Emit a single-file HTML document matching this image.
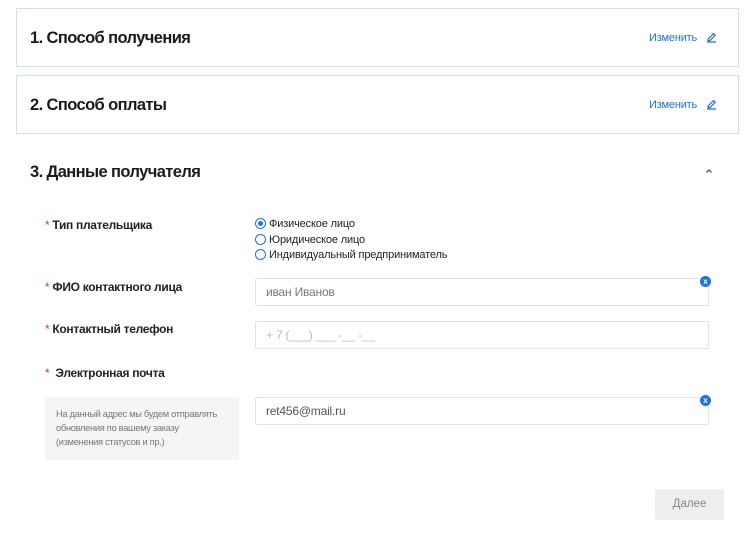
<!DOCTYPE html>
<html><head><meta charset="utf-8"><style>
*{margin:0;padding:0;box-sizing:border-box}
body{width:752px;height:535px;background:#fff;font-family:"Liberation Sans",sans-serif;position:relative;overflow:hidden;color:#222}
.card{position:absolute;left:16px;width:723px;height:59px;border:1px solid #cfe0f5;background:#fff}
.t{position:absolute;left:30px;font-size:16.5px;font-weight:bold;color:#1a1a1a;letter-spacing:-0.6px}
.ch{position:absolute;left:649px;font-size:11px;color:#1e6fd9;letter-spacing:-0.2px}
.pen{position:absolute;left:706px}
.lab{position:absolute;left:45px;font-size:12px;font-weight:bold;color:#222;letter-spacing:-0.3px}
.lab b{color:#e53935;font-weight:normal;margin-right:3px}
.r{position:absolute;left:255px;font-size:11px;color:#222;height:12px;line-height:12px;letter-spacing:-0.15px}
.r i{display:inline-block;width:11px;height:11px;border:1px solid #1a73e8;border-radius:50%;vertical-align:top;margin-right:3px;position:relative}
.r i.on::after{content:"";position:absolute;left:2px;top:2px;width:5px;height:5px;border-radius:50%;background:#1a73e8}
.in{position:absolute;left:255px;width:454px;height:28px;border:1px solid #e3e3e3;border-radius:2px;font-size:12px;color:#777;padding:6px 10px;letter-spacing:-0.2px}
.x{position:absolute;left:700px;width:11px;height:11px;border-radius:50%;background:#1a73e8;color:#fff;font-size:8px;line-height:11px;text-align:center;font-weight:bold}
</style></head><body>
<div class="card" style="top:8px"></div>
<div class="t" style="top:29px">1. Способ получения</div>
<div class="ch" style="top:32px">Изменить</div>
<svg class="pen" style="top:32px" width="11" height="11" viewBox="0 0 11 11"><path d="M2 8.5 L2.3 6.8 L7.5 1.6 L9.2 3.3 L4 8.5 Z M1 10 H10" fill="none" stroke="#1e6fd9" stroke-width="1.2"/></svg>
<div class="card" style="top:75px"></div>
<div class="t" style="top:96px">2. Способ оплаты</div>
<div class="ch" style="top:99px">Изменить</div>
<svg class="pen" style="top:99px" width="11" height="11" viewBox="0 0 11 11"><path d="M2 8.5 L2.3 6.8 L7.5 1.6 L9.2 3.3 L4 8.5 Z M1 10 H10" fill="none" stroke="#1e6fd9" stroke-width="1.2"/></svg>
<div class="t" style="top:163px">3. Данные получателя</div>
<svg style="position:absolute;left:705px;top:168px" width="8" height="6" viewBox="0 0 8 6"><path d="M1.5 4.5 L4 2 L6.5 4.5" fill="none" stroke="#555" stroke-width="1.3"/></svg>
<div class="lab" style="top:218px"><b>*</b>Тип плательщика</div>
<div class="r" style="top:218px"><i class="on"></i>Физическое лицо</div>
<div class="r" style="top:234px"><i></i>Юридическое лицо</div>
<div class="r" style="top:249px"><i></i>Индивидуальный предприниматель</div>
<div class="lab" style="top:280px"><b>*</b>ФИО контактного лица</div>
<div class="in" style="top:278px">иван Иванов</div>
<div class="x" style="top:276px">x</div>
<div class="lab" style="top:322px"><b>*</b>Контактный телефон</div>
<div class="in" style="top:321px;color:#bbb">+ 7 (___) ___ -__ -__</div>
<div class="lab" style="top:366px"><b>*</b>&nbsp;Электронная почта</div>
<div style="position:absolute;left:45px;top:397px;width:194px;height:63px;background:#f5f5f5;font-size:9.3px;color:#777;line-height:14px;padding:10px 11px;letter-spacing:-0.3px;white-space:nowrap">На данный адрес мы будем отправлять<br>обновления по вашему заказу<br>(изменения статусов и пр.)</div>
<div class="in" style="top:397px;color:#555">ret456@mail.ru</div>
<div class="x" style="top:395px">x</div>
<div style="position:absolute;left:655px;top:489px;width:69px;height:31px;background:#eee;border-radius:2px;font-size:11.5px;color:#888;text-align:center;line-height:31px">Далее</div>
</body></html>
